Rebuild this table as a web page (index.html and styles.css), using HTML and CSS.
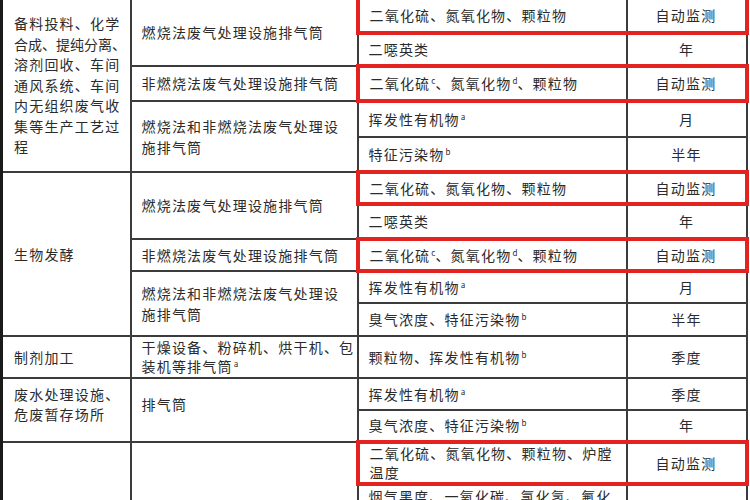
FILE: index.html
```html
<!DOCTYPE html>
<html lang="zh-CN">
<head>
<meta charset="utf-8">
<link rel="stylesheet" href="styles.css">
</head>
<body>
<table class="grid">
  <colgroup>
    <col class="w1"><col class="w2"><col class="w3"><col class="w4">
  </colgroup>
  <tr class="h1">
    <td class="c1" rowspan="5">备料投料、化学<br><span class="squeeze">合成、提纯分离、</span><br>溶剂回收、车间<br>通风系统、车间<br>内无组织废气收<br>集等生产工艺过<br>程</td>
    <td class="c2" rowspan="2">燃烧法废气处理设施排气筒</td>
    <td class="c3 red">二氧化硫、氮氧化物、颗粒物</td>
    <td class="c4 red">自动监测</td>
  </tr>
  <tr class="h2">
    <td class="c3">二噁英类</td>
    <td class="c4">年</td>
  </tr>
  <tr class="h3">
    <td class="c2">非燃烧法废气处理设施排气筒</td>
    <td class="c3 red">二氧化硫<sup>c</sup>、氮氧化物<sup>d</sup>、颗粒物</td>
    <td class="c4 red">自动监测</td>
  </tr>
  <tr class="h4">
    <td class="c2" rowspan="2">燃烧法和非燃烧法废气处理设<br>施排气筒</td>
    <td class="c3">挥发性有机物<sup>a</sup></td>
    <td class="c4">月</td>
  </tr>
  <tr class="h5">
    <td class="c3">特征污染物<sup>b</sup></td>
    <td class="c4">半年</td>
  </tr>
  <tr class="h6">
    <td class="c1" rowspan="5">生物发酵</td>
    <td class="c2" rowspan="2">燃烧法废气处理设施排气筒</td>
    <td class="c3 red">二氧化硫、氮氧化物、颗粒物</td>
    <td class="c4 red">自动监测</td>
  </tr>
  <tr class="h7">
    <td class="c3">二噁英类</td>
    <td class="c4">年</td>
  </tr>
  <tr class="h8">
    <td class="c2">非燃烧法废气处理设施排气筒</td>
    <td class="c3 red">二氧化硫<sup>c</sup>、氮氧化物<sup>d</sup>、颗粒物</td>
    <td class="c4 red">自动监测</td>
  </tr>
  <tr class="h9">
    <td class="c2" rowspan="2">燃烧法和非燃烧法废气处理设<br>施排气筒</td>
    <td class="c3">挥发性有机物<sup>a</sup></td>
    <td class="c4">月</td>
  </tr>
  <tr class="h10">
    <td class="c3">臭气浓度、特征污染物<sup>b</sup></td>
    <td class="c4">半年</td>
  </tr>
  <tr class="h11">
    <td class="c1">制剂加工</td>
    <td class="c2 tight">干燥设备、粉碎机、烘干机、包<br>装机等排气筒<sup>a</sup></td>
    <td class="c3">颗粒物、挥发性有机物<sup>b</sup></td>
    <td class="c4">季度</td>
  </tr>
  <tr class="h12">
    <td class="c1 raise" rowspan="2">废水处理设施、<br>危废暂存场所</td>
    <td class="c2 raise" rowspan="2">排气筒</td>
    <td class="c3">挥发性有机物<sup>a</sup></td>
    <td class="c4">季度</td>
  </tr>
  <tr class="h13">
    <td class="c3">臭气浓度、特征污染物<sup>b</sup></td>
    <td class="c4">年</td>
  </tr>
  <tr class="h14">
    <td class="c1" rowspan="2"></td>
    <td class="c2" rowspan="2"></td>
    <td class="c3 red tight2">二氧化硫、氮氧化物、颗粒物、炉膛<br>温度</td>
    <td class="c4 red">自动监测</td>
  </tr>
  <tr class="h15">
    <td class="c3 top">烟气黑度、一氧化碳、氯化氢、氟化</td>
    <td class="c4"></td>
  </tr>
</table>
</body>
</html>
```

FILE: styles.css
```css
html, body {
  margin: 0;
  padding: 0;
  background: #ffffff;
  overflow: hidden;
  width: 750px;
  height: 500px;
}

.grid {
  border-collapse: collapse;
  table-layout: fixed;
  width: 745px;
  margin-top: -4px;
  font-family: "Noto Sans CJK SC", "Noto Sans", sans-serif;
  font-size: 14px;
  letter-spacing: 1.2px;
  color: #2b2b2b;
  border-left: 3px solid #1a1a1a;
}

.w1 { width: 129px; }
.w2 { width: 227px; }
.w3 { width: 269px; }
.w4 { width: 120px; }

.grid td {
  border: 2px solid #3c3c3c;
  padding: 0 0 0 10px;
  vertical-align: middle;
  line-height: 20.5px;
  white-space: nowrap;
  overflow: hidden;
}

.grid td.c1 { padding-left: 11px; }
.grid td.c4 { text-align: center; padding-left: 0; }

.squeeze { letter-spacing: 0; }

.grid td.red { border-top: 4px solid #e2231f; border-bottom: 4px solid #e2231f; }
.grid td.c3.red { border-left: 4px solid #e2231f; }
.grid td.c4.red { border-right: 4px solid #e2231f; }

.grid td.tight { line-height: 19px; }
.grid td.tight2 { line-height: 19px; }
.grid td.top { vertical-align: top; padding-top: 0; }
.grid td.raise { padding-bottom: 12px; }

sup {
  font-size: 8px;
  line-height: 0;
  vertical-align: 5px;
  letter-spacing: 0;
  margin-left: 1px;
}

.h1 { height: 35px; }
.h2 { height: 33px; }
.h3 { height: 35px; }
.h4 { height: 36px; }
.h5 { height: 35px; }
.h6 { height: 32px; }
.h7 { height: 35px; }
.h8 { height: 32px; }
.h9 { height: 32px; }
.h10 { height: 33px; }
.h11 { height: 42px; }
.h12 { height: 32px; }
.h13 { height: 32px; }
.h14 { height: 40px; }
.h15 { height: 40px; }
```
